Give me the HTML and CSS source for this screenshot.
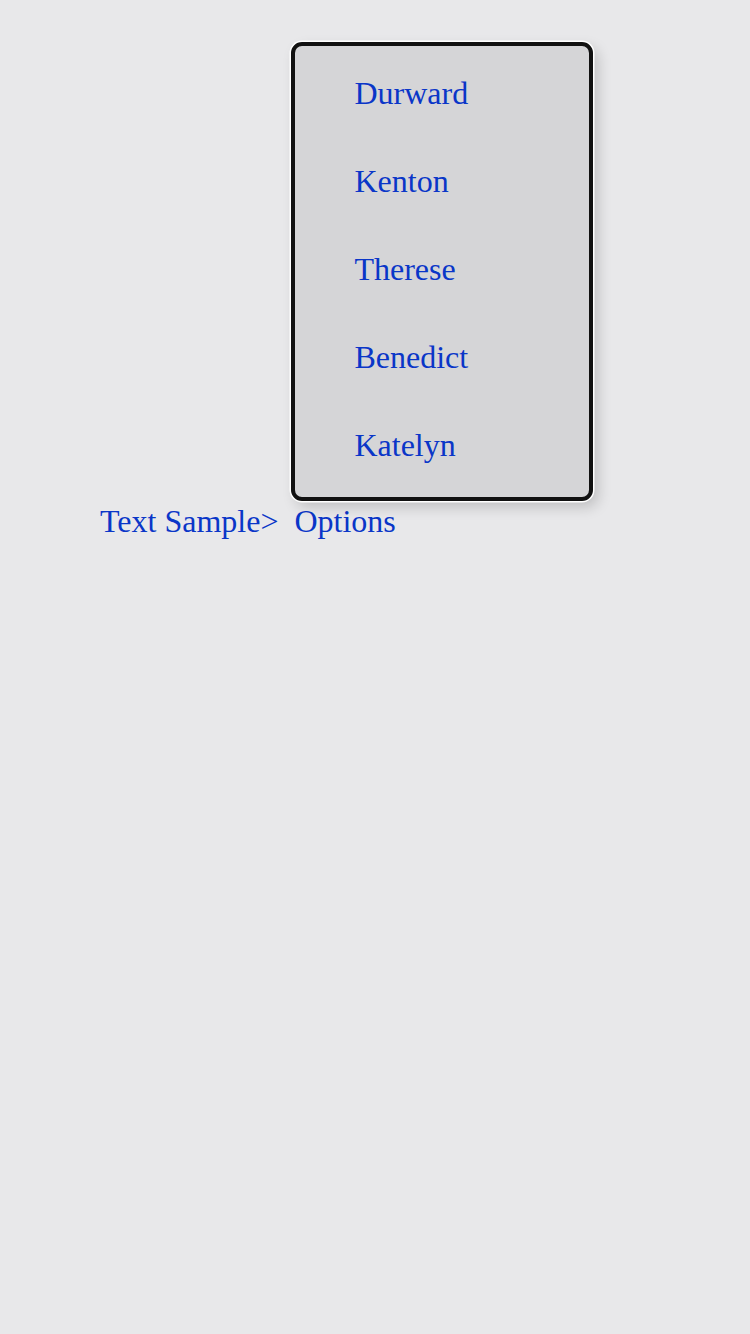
FILE: index.html
```html
<!DOCTYPE html>
<html>
<head>
<meta charset="utf-8">
<link rel="stylesheet" href="styles.css">
</head>
<body>
<div class="page">
  <div class="line">
    <span class="crumb">Text Sample&gt;&nbsp;</span>
    <span class="anchor">
      <span class="crumb">Options</span>
      <ul class="menu">
        <li class="item">Durward</li>
        <li class="item">Kenton</li>
        <li class="item">Therese</li>
        <li class="item">Benedict</li>
        <li class="item">Katelyn</li>
      </ul>
    </span>
  </div>
</div>
</body>
</html>
```
FILE: styles.css
```css
html, body {
  margin: 0;
  padding: 0;
  background: #e8e8ea;
}
.page {
  width: 750px;
  height: 1334px;
  padding: 504px 0 0 100px;
  box-sizing: border-box;
  font-family: "Liberation Serif", "Times New Roman", serif;
  font-size: 32px;
  color: #0a36c8;
}
.line {
  line-height: 34px;
  white-space: nowrap;
}
.anchor {
  position: relative;
  display: inline-block;
}
.menu {
  position: absolute;
  left: -3px;
  bottom: calc(100% + 3px);
  width: 294px;
  margin: 0;
  padding: 3px 0 8px;
  list-style: none;
  background: #d5d5d7;
  border: 4px solid #111;
  border-radius: 11px;
  box-shadow: 0 0 0 1.5px #fff, 5px 6px 14px rgba(0, 0, 0, 0.18);
}
.item {
  height: 88px;
  line-height: 88px;
  padding-left: 59px;
}
```
